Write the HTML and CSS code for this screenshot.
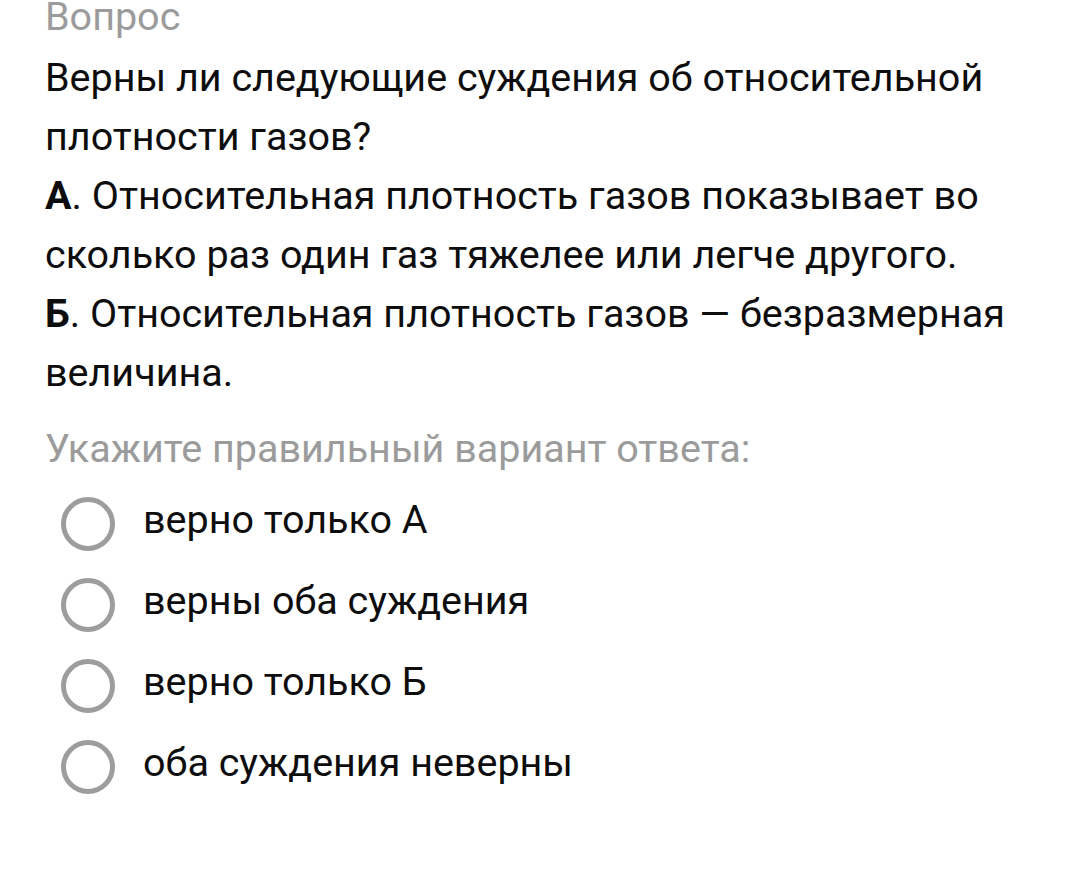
FILE: index.html
```html
<!DOCTYPE html>
<html lang="ru">
<head>
<meta charset="utf-8">
<link rel="stylesheet" href="styles.css">
</head>
<body>
<main class="question">
  <div class="label">Вопрос</div>
  <div class="text">
    <p>Верны ли следующие суждения об относительной плотности газов?</p>
    <p><b>А</b>. Относительная плотность газов показывает во сколько раз один газ тяжелее или легче другого.</p>
    <p><b>Б</b>. Относительная плотность газов — безразмерная величина.</p>
  </div>
  <div class="hint">Укажите правильный вариант ответа:</div>
  <ul class="options">
    <li class="option"><span class="radio"></span><span class="opt-text">верно только А</span></li>
    <li class="option"><span class="radio"></span><span class="opt-text">верны оба суждения</span></li>
    <li class="option"><span class="radio"></span><span class="opt-text">верно только Б</span></li>
    <li class="option"><span class="radio"></span><span class="opt-text">оба суждения неверны</span></li>
  </ul>
</main>
</body>
</html>
```
FILE: styles.css
```css
html, body {
  margin: 0;
  padding: 0;
  background: #ffffff;
}
body {
  font-family: Roboto, "Noto Sans", sans-serif;
  font-size: 39.5px;
  color: #0d0d0d;
}
.question {
  padding: 0 30px 0 45px;
}
.label {
  line-height: 33px;
  color: #9b9b9b;
  margin-bottom: 15px;
}
.text {
  line-height: 59px;
}
.text p {
  margin: 0;
}
.text b {
  font-weight: 700;
}
.hint {
  line-height: 59px;
  color: #9b9b9b;
  margin-top: 17px;
}
.options {
  list-style: none;
  margin: 5px 0 0 0;
  padding: 0;
}
.option {
  display: flex;
  align-items: center;
  height: 81px;
}
.radio {
  box-sizing: border-box;
  width: 54px;
  height: 54px;
  border: 5px solid #9d9d9d;
  border-radius: 50%;
  margin-left: 16px;
  margin-right: 28px;
  flex: none;
}
.opt-text {
  margin-bottom: 8px;
}
```
